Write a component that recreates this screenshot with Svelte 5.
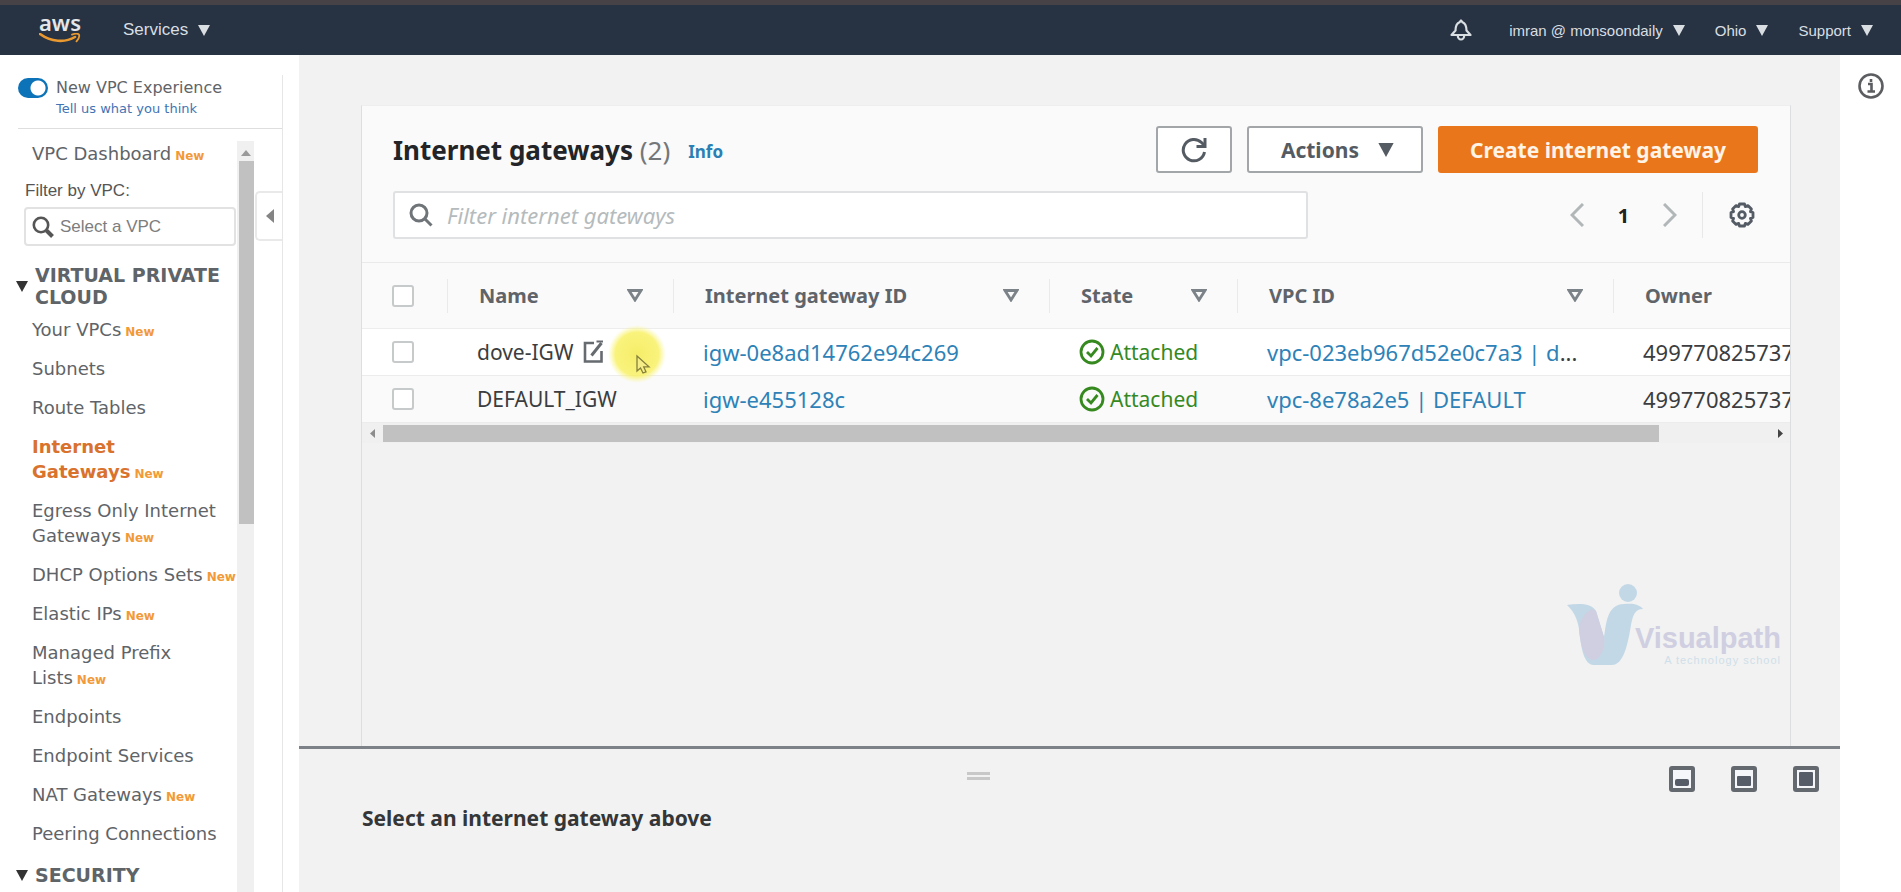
<script>
  const before = [{ label: 'VPC Dashboard', isNew: true }];
  const items = [
    { label: 'Your VPCs', isNew: true },
    { label: 'Subnets' },
    { label: 'Route Tables' },
    { label: 'Internet\nGateways', isNew: true, active: true },
    { label: 'Egress Only Internet\nGateways', isNew: true },
    { label: 'DHCP Options Sets', isNew: true },
    { label: 'Elastic IPs', isNew: true },
    { label: 'Managed Prefix\nLists', isNew: true },
    { label: 'Endpoints' },
    { label: 'Endpoint Services' },
    { label: 'NAT Gateways', isNew: true },
    { label: 'Peering Connections' }
  ];
  const columns = [
    { label: 'Name', cls: 'c-name', sort: true },
    { label: 'Internet gateway ID', cls: 'c-id', sort: true },
    { label: 'State', cls: 'c-state', sort: true },
    { label: 'VPC ID', cls: 'c-vpc', sort: true },
    { label: 'Owner', cls: 'c-owner', sort: false }
  ];
  const rows = [
    { name: 'dove-IGW', id: 'igw-0e8ad14762e94c269', vpc: 'vpc-023eb967d52e0c7a3 | d', cut: true, owner: '499770825737', edit: true },
    { name: 'DEFAULT_IGW', id: 'igw-e455128c', vpc: 'vpc-8e78a2e5 | DEFAULT', cut: false, owner: '499770825737', edit: false }
  ];
  let experience = $state(true);
</script>

{#snippet caret()}
  <svg class="caret" viewBox="0 0 12 11" aria-hidden="true"><path d="M0 0h12L6 11z" fill="currentColor" /></svg>
{/snippet}

{#snippet link(item)}
  <li><a href="#nav" class:active={item.active}>{item.label}</a>{#if item.isNew}<span class="new">New</span>{/if}</li>
{/snippet}

<div class="shell">
  <header>
    <a class="logo" href="#home">
      <span>aws</span>
      <svg viewBox="0 0 42 12" aria-hidden="true">
        <path d="M1 1C12 9 26 10 36 4" fill="none" stroke="#e9992f" stroke-width="2.6" stroke-linecap="round" />
        <path d="M33 1.6c3-1 6-1 7 0 .6 1.6-.5 4.6-2.5 6.8" fill="none" stroke="#e9992f" stroke-width="1.8" stroke-linecap="round" stroke-linejoin="round" />
      </svg>
    </a>
    <button class="services">Services {@render caret()}</button>
    <div class="account">
      <button class="bell" aria-label="Notifications">
        <svg viewBox="0 0 22 22" fill="none" stroke="currentColor" stroke-width="2.2" stroke-linejoin="round">
          <path d="M1.500 16 5.500 11.500C5.500 7 6.500 4.500 9.500 3.200L11 1.500l1.500 1.700C15.500 4.500 16.500 7 16.500 11.500L20.500 16z" />
          <path d="M7.800 16.500a3.200 4 0 0 0 6.400 0" />
        </svg>
      </button>
      <button>imran @ monsoondaily {@render caret()}</button>
      <button>Ohio {@render caret()}</button>
      <button>Support {@render caret()}</button>
    </div>
  </header>

  <div class="body">
    <aside>
      <div class="side">
        <div class="experience">
          <input id="exp" type="checkbox" role="switch" bind:checked={experience} />
          <div>
            <label for="exp">New VPC Experience</label>
            <a href="#feedback">Tell us what you think</a>
          </div>
        </div>
        <div class="navwrap">
          <nav>
            <ul class="first">
              {#each before as item}{@render link(item)}{/each}
            </ul>
            <label class="filter-label" for="vpc">Filter by VPC:</label>
            <div class="vpc">
              <svg viewBox="0 0 22 22" fill="none" stroke="#555" aria-hidden="true">
                <circle cx="9" cy="9" r="7.2" stroke-width="2.6" />
                <path d="m14.500 14.500 6 6" stroke-width="4" />
              </svg>
              <input id="vpc" type="text" placeholder="Select a VPC" />
            </div>
            <button class="section">{@render caret()}<span>VIRTUAL PRIVATE CLOUD</span></button>
            <ul>
              {#each items as item}{@render link(item)}{/each}
            </ul>
            <button class="section">{@render caret()}<span>SECURITY</span></button>
          </nav>
          <div class="vbar" aria-hidden="true">
            <svg viewBox="0 0 10 6"><path d="M0 6 5 0l5 6z" fill="#9a9a9a" /></svg>
            <div></div>
          </div>
          <button class="collapse" aria-label="Collapse navigation">
            <svg viewBox="0 0 8 14"><path d="M8 0v14L0 7z" fill="#848484" /></svg>
          </button>
        </div>
      </div>
    </aside>

    <main>
      <div class="content">
        <section class="card">
          <div class="head">
            <div class="titlebar">
              <h1>Internet gateways <span>(2)</span></h1>
              <a class="info" href="#info">Info</a>
              <div class="actions">
                <button class="refresh" aria-label="Refresh">
                  <svg viewBox="0 0 26 26" fill="none" stroke="currentColor" stroke-width="3">
                    <path d="M23.500 15A10.700 10.700 0 1 1 20.500 5.500L24 9" />
                    <path d="M24 1v8.500h-8.500" />
                  </svg>
                </button>
                <button class="menu">Actions {@render caret()}</button>
                <button class="primary">Create internet gateway</button>
              </div>
            </div>
            <div class="tools">
              <div class="search">
                <svg viewBox="0 0 24 24" fill="none" stroke="#6f7479" stroke-width="3" aria-hidden="true">
                  <circle cx="10" cy="10" r="8" /><path d="m16 16 6.500 6.500" />
                </svg>
                <input type="text" aria-label="Filter internet gateways" placeholder="Filter internet gateways" />
              </div>
              <div class="pager">
                <button aria-label="Previous page"><svg viewBox="0 0 14 24"><path d="M13 1 2 12l11 11" /></svg></button>
                <b>1</b>
                <button aria-label="Next page"><svg viewBox="0 0 14 24"><path d="m1 1 11 11L1 23" /></svg></button>
                <button class="gear" aria-label="Preferences">
                  <svg viewBox="0 0 26 26" stroke-linejoin="round">
                    <path d="M10.500 2h5l.8 2.600 2.600-1 3.500 3.500-1 2.600L24 10.500v5l-2.600.8 1 2.600-3.500 3.500-2.600-1-.8 2.600h-5l-.8-2.600-2.600 1-3.500-3.500 1-2.600L2 15.500v-5l2.600-.8-1-2.600 3.500-3.500 2.600 1z" />
                    <circle cx="13" cy="13" r="3.300" />
                  </svg>
                </button>
              </div>
            </div>
          </div>

          <div class="scroll">
            <table>
              <thead>
                <tr>
                  <th class="c-check"><input type="checkbox" aria-label="Select all" /></th>
                  {#each columns as col}
                    <th class={col.cls}>
                      <div>
                        <span>{col.label}</span>
                        {#if col.sort}
                          <svg viewBox="0 0 16 13" aria-hidden="true"><path d="M2 1.500h12L8 11z" fill="none" stroke="#7c8388" stroke-width="2.8" /></svg>
                        {/if}
                      </div>
                    </th>
                  {/each}
                </tr>
              </thead>
              <tbody>
                {#each rows as row}
                  <tr>
                    <td class="c-check"><input type="checkbox" aria-label={'Select ' + row.name} /></td>
                    <td>
                      <div class="cell">
                        {row.name}
                        {#if row.edit}
                          <svg class="edit" viewBox="0 0 22 24" fill="none" stroke="#666b70" stroke-width="2.6" aria-hidden="true">
                            <path d="M11 3H2v18.500h16.500V11" /><path d="M8.500 15.500 18.500 3" stroke-width="3" /><path d="M13.500 1.500H20" stroke-width="2" />
                          </svg>
                          <svg class="pointer" viewBox="0 0 60 60" aria-hidden="true">
                            <defs>
                              <radialGradient id="glow"><stop offset="0" stop-color="#f3ea4d" stop-opacity=".85" /><stop offset=".75" stop-color="#f8f05c" stop-opacity=".8" /><stop offset="1" stop-color="#fbf67e" stop-opacity="0" /></radialGradient>
                            </defs>
                            <circle cx="30" cy="30" r="29" fill="url(#glow)" />
                            <path d="M30 32v15l3.500-3 2.500 5 3-1.200-2.300-5H42z" fill="#f5ee88" stroke="#85803a" stroke-width="1.300" />
                          </svg>
                        {/if}
                      </div>
                    </td>
                    <td class="code"><a href="#gateway">{row.id}</a></td>
                    <td>
                      <span class="ok">
                        <svg viewBox="0 0 26 26" fill="none" stroke="currentColor" stroke-width="2.8" aria-hidden="true"><circle cx="13" cy="13" r="11" /><path d="m8 13 4 4 6.500-8" /></svg>Attached
                      </span>
                    </td>
                    <td class="code"><a href="#vpc-detail">{row.vpc}</a>{#if row.cut}...{/if}</td>
                    <td class="code">{row.owner}</td>
                  </tr>
                {/each}
              </tbody>
            </table>
          </div>
          <div class="hbar" aria-hidden="true">
            <svg viewBox="0 0 5 9"><path d="M5 0v9L0 4.500z" fill="#8c8c8c" /></svg>
            <div class="track"><div></div></div>
            <svg viewBox="0 0 5 9"><path d="M0 0v9l5-4.500z" fill="#444" /></svg>
          </div>
        </section>

        <div class="watermark">
          <svg viewBox="0 0 78 84" aria-hidden="true">
            <circle cx="62" cy="10" r="9" fill="#c3d8e6" />
            <path d="M1 22C12 20 26 20 30 28L38 54 C40 44 40 21 58 21 68 20 74 22 77 26 69 26 67 32 65 42 62 60 58 82 46 82H27C16 80 15 60 13 46 11 34 7 28 1 22z" fill="#c3d8e6" />
            <path d="M26 26C19 29 13 38 13 46 14 61 18 76 27 77 34 77 40 65 38 54L30 28z" fill="#cfcfe1" />
          </svg>
          <div>
            <strong>Visualpath</strong>
            <small>A technology school</small>
          </div>
        </div>
      </div>

      <section class="split">
        <div class="handle" aria-hidden="true"></div>
        <div class="panes">
          <button aria-label="Small panel"><svg viewBox="0 0 26 26"><rect x="2" y="2" width="22" height="22" rx="1" /><rect class="in" x="6" y="13" width="14" height="7" rx="2" /></svg></button>
          <button aria-label="Medium panel"><svg viewBox="0 0 26 26"><rect x="2" y="2" width="22" height="22" rx="1" /><rect class="in" x="6" y="10" width="14" height="10" rx="1" /></svg></button>
          <button aria-label="Full panel"><svg viewBox="0 0 26 26"><rect x="2" y="2" width="22" height="22" rx="1" /><rect class="in" x="6" y="6" width="14" height="14" rx="1" /></svg></button>
        </div>
        <h2>Select an internet gateway above</h2>
      </section>
    </main>

    <div class="help">
      <button aria-label="Open help panel">
        <svg viewBox="0 0 26 26" fill="none" stroke="#5b5d60" stroke-width="2.6"><circle cx="13" cy="13" r="11.500" /><path d="M10 11h3.500v7.500M9.500 18.500h7.500" /><path d="M11.700 7.500h2.600" stroke-width="3" /></svg>
      </button>
    </div>
  </div>
</div>

<style>
  :global(body) { margin: 0; background: #fff; }
  * { box-sizing: border-box; }
  button { border: 0; background: none; padding: 0; margin: 0; font: inherit; color: inherit; cursor: pointer; }
  a { text-decoration: none; }
  svg { display: block; flex: none; }
  ul { list-style: none; margin: 0; padding: 0; }

  .shell { height: 100vh; display: flex; flex-direction: column; font-family: "Noto Sans", sans-serif; color: #3b3d40; }

  header { flex: none; height: 55px; border-top: 5px solid #474246; background: #273343; color: #d9dee2; display: flex; align-items: center; padding: 0 28px 0 39px; font-family: "Liberation Sans", Arial, sans-serif; font-size: 15px; }
  header button { display: flex; align-items: center; gap: 10px; }
  .caret { width: 12px; height: 11px; }
  .logo { color: #e4e6e8; display: flex; flex-direction: column; width: 42px; font: 600 22px/20px "Noto Sans", sans-serif; }
  .logo span { margin-top: -3px; }
  .logo svg { width: 42px; height: 12px; margin-top: 1px; }
  .services { margin-left: 42px; font-size: 17px; }
  .account { margin-left: auto; display: flex; gap: 30px; }
  .bell { margin-right: 7px; }
  .bell svg { width: 22px; height: 22px; }

  .body { flex: 1; min-height: 0; display: flex; }
  aside { flex: none; width: 299px; padding: 20px 16px 0; font-family: "DejaVu Sans", Verdana, sans-serif; color: #5f6468; }
  .side { height: 100%; display: flex; flex-direction: column; border-right: 1px solid #e6e6e6; }
  .experience { display: flex; gap: 8px; height: 54px; margin-left: 2px; border-bottom: 1px solid #dedede; }
  .experience input { appearance: none; flex: none; width: 30px; height: 20px; margin: 3px 0 0; border-radius: 10px; background: radial-gradient(circle at 20px 10px, #fff 7px, #0d73b8 8px); }
  .experience label { display: block; font-size: 16px; line-height: 26px; }
  .experience a { display: block; font-size: 13px; line-height: 16px; color: #3f74b5; }
  .navwrap { flex: 1; min-height: 0; display: flex; padding-top: 12px; }
  nav { width: 221px; overflow: hidden; }
  nav ul { display: flex; flex-direction: column; gap: 14px; padding-left: 16px; font-size: 18px; line-height: 25px; }
  nav li { white-space: pre; }
  nav li a { color: inherit; }
  nav li a.active { color: #d9722d; font-weight: 700; }
  .new { margin-left: 4px; color: #f29a38; font-size: 12px; line-height: 12px; font-weight: 700; }
  .filter-label { display: block; margin: 15px 0 6px 9px; font: 17px/20px "Liberation Sans", Arial, sans-serif; color: #555; }
  .vpc { display: flex; align-items: center; gap: 6px; height: 39px; margin: 0 1px 0 8px; padding: 0 6px; border: 2px solid #e2e2e2; border-radius: 4px; }
  .vpc svg { width: 22px; height: 22px; }
  .vpc input { border: 0; outline: 0; padding: 0; width: 100%; min-width: 0; background: none; font: 17px "Liberation Sans", Arial, sans-serif; }
  .vpc input::placeholder { color: #7d7d7d; opacity: 1; }
  .section { display: flex; align-items: center; gap: 7px; margin: 18px 0 9px; text-align: left; font-size: 19px; line-height: 22px; font-weight: 700; }
  .section .caret { color: #333; }
  .section span { flex: 1; }
  .vbar { width: 17px; background: #f0f0f0; display: flex; flex-direction: column; align-items: center; padding-top: 9px; }
  .vbar svg { width: 10px; height: 6px; }
  .vbar div { width: 15px; height: 363px; margin: 5px 0 0 2px; background: #c1c1c1; }
  .collapse { width: 27px; height: 50px; margin: 50px 0 0 1px; border: 2px solid #e9e9e9; border-right: 0; border-radius: 5px 0 0 5px; display: flex; align-items: center; justify-content: flex-end; padding-right: 8px; }
  .collapse svg { width: 8px; height: 14px; }

  main { flex: 1; min-width: 0; display: flex; flex-direction: column; background: #f2f2f2; }
  .content { position: relative; flex: 1; min-height: 0; padding: 50px 49px 0 62px; display: flex; }
  .card { flex: 1; min-width: 0; border: 1px solid #dcdedf; border-top-color: #eee; border-bottom: 0; }
  .head { background: #fafafa; padding: 20px 32px 23px 31px; }
  .titlebar { display: flex; align-items: center; }
  h1 { margin: 0; font-size: 26px; line-height: 36px; color: #222427; }
  h1 span { font-weight: 400; color: #74777a; }
  .info { margin: 4px 0 0 18px; font-size: 17px; font-weight: 700; color: #2a80b4; }
  .actions { margin-left: auto; display: flex; gap: 15px; font-size: 21px; font-weight: 700; color: #555b63; }
  .actions button { height: 47px; border: 2px solid #a3a6a9; border-radius: 3px; background: #fff; display: flex; align-items: center; justify-content: center; }
  .refresh { width: 76px; }
  .refresh svg { width: 26px; height: 26px; }
  .actions .menu { padding: 0 27px 0 32px; gap: 19px; }
  .menu .caret { width: 16px; height: 14px; }
  .actions .primary { padding: 0 30px; background: #ea761c; border-color: #ea761c; color: #fff4e6; }
  .tools { display: flex; align-items: center; justify-content: space-between; margin-top: 18px; }
  .search { width: 67%; height: 48px; display: flex; align-items: center; gap: 14px; padding: 0 14px; border: 2px solid #dfe1e2; border-radius: 3px; background: #fff; }
  .search svg { width: 24px; height: 24px; }
  .search input { flex: 1; min-width: 0; border: 0; outline: 0; padding: 0; font: italic 22px "Noto Sans", sans-serif; }
  .search input::placeholder { color: #b5bbbd; opacity: 1; }
  .pager { display: flex; align-items: center; height: 46px; }
  .pager button svg { width: 14px; height: 24px; fill: none; stroke: #b1b6b8; stroke-width: 3; }
  .pager b { width: 79px; text-align: center; font-size: 20px; color: #222; }
  .pager .gear { height: 46px; margin-left: 25px; padding: 0 3px 0 26px; border-left: 1px solid #e8e8e8; }
  .pager .gear svg { width: 26px; height: 26px; stroke: #545b64; stroke-width: 2.8; }

  .scroll { overflow: hidden; background: #fafafa; }
  table { table-layout: fixed; width: 1552px; border-collapse: collapse; font-size: 21px; }
  th { height: 66px; padding: 0; text-align: left; font-size: 20px; color: #5f646a; border-top: 1px solid #eaeaea; border-bottom: 1px solid #ededed; }
  th > div { display: flex; align-items: center; justify-content: space-between; height: 34px; padding: 0 30px 0 31px; border-left: 1px solid #eaeaea; }
  th svg { width: 16px; height: 13px; }
  .c-check { width: 85px; padding-left: 30px; }
  .c-name { width: 226px; }
  .c-id { width: 376px; }
  .c-state { width: 188px; }
  .c-vpc { width: 376px; }
  td { height: 47px; padding: 0 0 0 30px; white-space: nowrap; border-bottom: 1px solid #ececec; }
  .code { font-size: 22px; line-height: 28px; }
  tbody tr:first-child { background: #fff; }
  td a { color: #2e82b7; }
  table input { appearance: none; display: block; width: 22px; height: 22px; margin: 0; border: 2px solid #c6cacb; border-radius: 3px; background: #fff; }
  .cell { position: relative; display: flex; align-items: center; gap: 10px; }
  .edit { width: 22px; height: 24px; }
  .pointer { position: absolute; left: 130px; top: -14px; width: 60px; height: 60px; }
  .ok { display: flex; align-items: center; gap: 5px; color: #35891f; }
  .ok svg { width: 26px; height: 26px; }
  .hbar { display: flex; align-items: center; gap: 8px; height: 20px; padding: 0 7px 0 8px; background: #f0f0f0; }
  .hbar svg { width: 5px; height: 9px; }
  .track { flex: 1; }
  .track div { width: 92%; height: 17px; background: #c1c1c1; }

  .watermark { position: absolute; right: 59px; bottom: 79px; display: flex; font-family: "Liberation Sans", Arial, sans-serif; }
  .watermark svg { width: 78px; height: 84px; }
  .watermark div { display: flex; flex-direction: column; align-items: flex-end; margin-left: -9px; padding-top: 39px; }
  .watermark strong { font-size: 29px; line-height: 32px; color: #cfcfe1; }
  .watermark small { font-size: 11px; line-height: 12px; letter-spacing: 1px; color: #cfdfe9; }

  .split { flex: none; position: relative; min-height: 146px; border-top: 3px solid #7c8288; padding: 54px 63px 0; }
  .handle { position: absolute; top: 23px; left: 50%; width: 23px; height: 8px; margin-left: -103px; border: solid #c8c8c8; border-width: 3px 0; }
  .panes { position: absolute; top: 17px; right: 21px; display: flex; gap: 36px; }
  .panes svg { width: 26px; height: 26px; }
  .panes rect { fill: #f5f6f9; stroke: #646970; stroke-width: 4; }
  .panes rect.in { fill: #565d68; stroke: none; }
  h2 { margin: 0; font-size: 21px; line-height: 30px; color: #343638; }

  .help { flex: none; width: 61px; padding: 18px 0 0 18px; }
  .help svg { width: 26px; height: 26px; }
</style>
